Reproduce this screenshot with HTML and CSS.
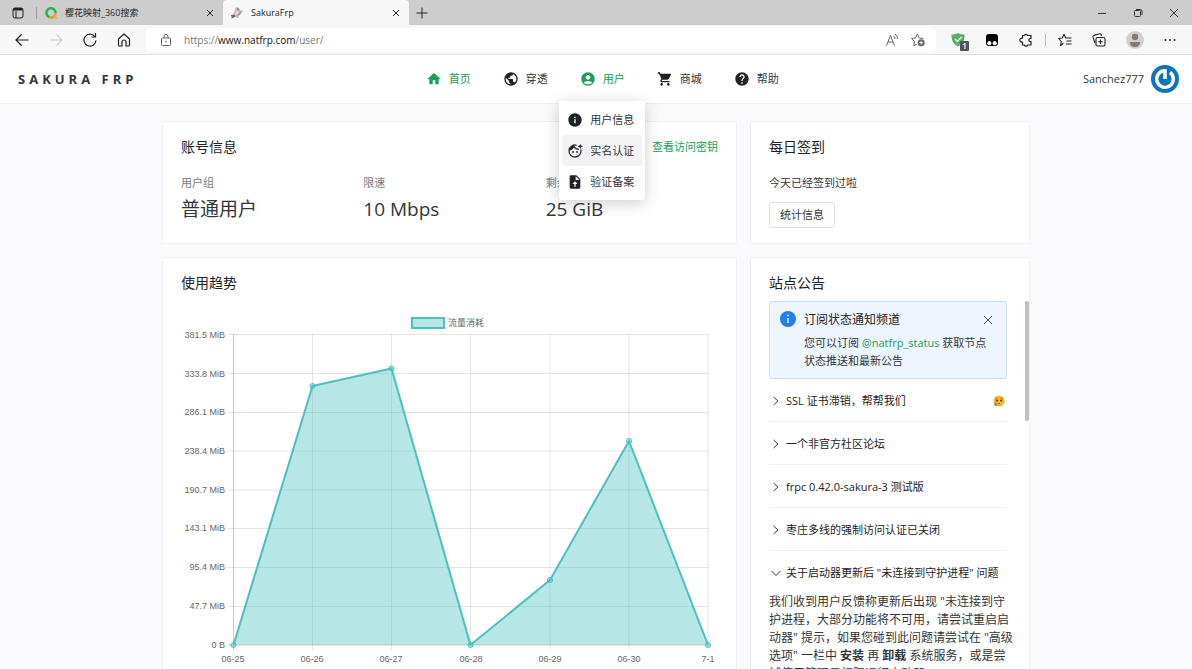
FILE: index.html
```
<!DOCTYPE html>
<html lang="zh-CN">

<head>
    <meta charset="UTF-8">
    <meta name="viewport" content="width=device-width, initial-scale=1.0">
    <title>SakuraFrp</title>
    <link rel="stylesheet" href="styles.css">
</head>

<body>
    <!-- Browser tabs -->
    <div class="tab-bar">
        <button class="tab-menu" aria-label="标签页操作">
            <svg class="icon-12" viewBox="0 0 12 12" fill="none" stroke="#222"><rect x="1" y="1" width="10" height="10" rx="2" /><path d="M1 3h10M4 4v7" /><path d="M1.500 2h9" stroke-width="2" /></svg>
        </button>
        <div class="tab">
            <svg class="icon-12" viewBox="0 0 12 12" fill="none" stroke-width="2.400"><path d="M8.500 9.700A4.600 4.600 0 1 1 10.600 6" stroke="#19b955" /><path d="M10.600 6a4.600 4.600 0 0 1-6.500 4.200" stroke="#f9a11b" /><circle cx="11" cy="10.800" r=".5" fill="#f9a11b" stroke="#f9a11b" stroke-width="1" /></svg>
            <span class="tab-title">樱花映射_360搜索</span>
            <button class="tab-close" aria-label="关闭"><svg class="icon-8" viewBox="0 0 8 8" stroke="#222"><path d="M1 1l6 6M7 1L1 7" /></svg></button>
        </div>
        <div class="tab tab-active">
            <svg class="icon-12" viewBox="0 0 12 12"><path d="M5 0l3 1 1 2 3 1-2 3-2 1-1 3-3-1-4 2 1-4 2-2z" fill="#b9b4bd" /><path d="M5 3l3 1-1 3-3 1z" fill="#e9d5d0" /><path d="M0 8l4 0 0 2-3 1zM6 1l2 1-1 2z" fill="#666a7c" /><path d="M7 7l3-2-2 4z" fill="#c98083" /></svg>
            <span class="tab-title">SakuraFrp</span>
            <button class="tab-close" aria-label="关闭"><svg class="icon-8" viewBox="0 0 8 8" stroke="#222"><path d="M1 1l6 6M7 1L1 7" /></svg></button>
        </div>
        <button class="tab-new" aria-label="新建标签页"><svg class="icon-12" viewBox="0 0 12 12" stroke="#222"><path d="M6 .5v11M.5 6h11" /></svg></button>
        <div class="window-buttons">
            <button aria-label="最小化"><svg class="icon-10" viewBox="0 0 10 10" stroke="#333"><path d="M1 5.500h8" /></svg></button>
            <button aria-label="还原"><svg class="icon-10" viewBox="0 0 10 10" fill="none" stroke="#333"><rect x="1.500" y="2.500" width="6" height="6" rx="1" /><path d="M3 1.500h4.500a1.500 1.500 0 0 1 1.500 1.500V7" /></svg></button>
            <button aria-label="关闭窗口"><svg class="icon-10" viewBox="0 0 10 10" stroke="#333"><path d="M1 1l8 8M9 1L1 9" /></svg></button>
        </div>
    </div>

    <!-- Browser toolbar -->
    <div class="toolbar">
        <div class="toolbar-nav">
            <button aria-label="后退"><svg class="icon-14" viewBox="0 0 14 14" fill="none" stroke="#222" stroke-width="1.200"><path d="M13.500 7H1M6.500 1.500L1 7l5.500 5.500" /></svg></button>
            <button aria-label="前进" disabled><svg class="icon-14" viewBox="0 0 14 14" fill="none" stroke="#ccc" stroke-width="1.200"><path d="M.5 7H13M7.500 1.500L13 7l-5.500 5.500" /></svg></button>
            <button aria-label="刷新"><svg class="icon-14" viewBox="0 0 14 14" fill="none" stroke="#222" stroke-width="1.200"><path d="M13 7.500A6 6 0 1 1 11.800 3.500M12.500 0v4h-4" /></svg></button>
            <button aria-label="主页"><svg class="icon-14" viewBox="0 0 14 14" fill="none" stroke="#222" stroke-width="1.200"><path d="M1.500 6L7 1l5.500 5v6a1 1 0 0 1-1 1H9V9a2 2 0 0 0-4 0v4H2.500a1 1 0 0 1-1-1z" stroke-linejoin="round" /></svg></button>
        </div>
        <div class="address">
            <svg class="icon-12" viewBox="0 0 12 12" fill="none" stroke="#666"><rect x="1.500" y="4" width="9" height="7.500" rx="1" /><path d="M4 4V2.500a2 2 0 0 1 4 0V4" /><circle cx="6" cy="7.700" r=".8" fill="#666" stroke="none" /></svg>
            <span class="url">https://<b>www.natfrp.com</b>/user/</span>
            <button aria-label="大声朗读"><svg class="icon-14" viewBox="0 0 14 14" fill="none" stroke="#666"><path d="M1.500 12.500L5.500 2.500l4 10M3 9h5M8.500 3a3 3 0 0 1 1.500 3M10 1a6 6 0 0 1 2.500 5" /></svg></button>
            <button aria-label="添加收藏"><svg class="icon-14" viewBox="0 0 14 14" fill="none" stroke="#666"><path d="M6 11l-3.200 1.700.6-4.200L.6 5.500l4-.6L6.400 1l1.800 3.900 4 .6" stroke-linejoin="round" /><circle cx="10.200" cy="9.700" r="3.500" fill="#666" stroke="none" /><path d="M10.200 8v3.400M8.500 9.700h3.400" stroke="#fff" /></svg></button>
        </div>
        <div class="toolbar-tools">
            <button class="shield" aria-label="安全防护">
                <svg class="icon-14" viewBox="0 0 14 14"><path d="M7 0c2 1.400 4 1.600 6.500 1.600C13.500 7.500 12 11 7 13.500 2 11 .5 7.500.5 1.600 3 1.600 5 1.400 7 0z" fill="#52b264" /><path d="M4 6l2.500 2.500L10.500 4" fill="none" stroke="#fff" stroke-width="1.300" /></svg>
                <span class="badge">1</span>
            </button>
            <button aria-label="Tampermonkey"><svg class="icon-14" viewBox="0 0 14 14"><rect x="1" y="1" width="12" height="12" rx="3" fill="#000" /><circle cx="4.300" cy="10.200" r="2.100" fill="#fff" /><circle cx="9.700" cy="10.200" r="2.100" fill="#fff" /></svg></button>
            <button aria-label="扩展"><svg class="icon-14" viewBox="0 0 14 14" fill="none" stroke="#222" stroke-width="1.200"><path d="M3.500 2.500h1.800a1.800 1.800 0 0 1 3.400 0H12v3a1.600 1.600 0 1 0 0 3v3.500H8.700a1.800 1.800 0 0 1-3.400 0H3.500V9a2 2 0 1 1 0-3.800z" stroke-linejoin="round" /></svg></button>
            <span class="toolbar-line"></span>
            <button aria-label="收藏夹"><svg class="icon-14" viewBox="0 0 14 14" fill="none" stroke="#222" stroke-width="1.100"><path d="M5.500 10.300L2.500 12.500l.8-4L.6 5.500l3.600-.5L6 1.200 7.800 5h5.700M8.500 8h5M8 11h5.500" stroke-linejoin="round" /></svg></button>
            <button aria-label="集锦"><svg class="icon-14" viewBox="0 0 14 14" fill="none" stroke="#222" stroke-width="1.100"><rect x="4" y="4.500" width="9" height="8.500" rx="1.500" /><path d="M8.500 6.500v4.500M6.200 8.800h4.600M3 10L1 4.200a1.500 1.500 0 0 1 1-1.800L7.500.8a1.500 1.500 0 0 1 1.800 1L9.600 3" /></svg></button>
            <button aria-label="个人资料"><svg class="icon-18" viewBox="0 0 18 18"><circle cx="9" cy="9" r="9" fill="#d2d0ce" /><circle cx="9" cy="6" r="3.200" fill="#7f7b79" /><path d="M3.800 11h10.400c0 3-2 5-5.200 5s-5.200-2-5.200-5z" fill="#7f7b79" /></svg></button>
            <button aria-label="更多"><svg class="icon-12" viewBox="0 0 12 12" fill="#222"><circle cx="1.500" cy="6" r="1" /><circle cx="6" cy="6" r="1" /><circle cx="10.500" cy="6" r="1" /></svg></button>
        </div>
    </div>

    <!-- Site header -->
    <header class="site-header">
        <a class="logo" href="#">SAKURA FRP</a>
        <nav class="site-nav">
            <a class="nav-link active" href="#">
                <svg class="icon-16" viewBox="0 0 24 24"><path d="M10 20v-6h4v6h5v-8h3L12 3 2 12h3v8z" /></svg>
                首页
            </a>
            <a class="nav-link" href="#">
                <svg class="icon-16" viewBox="0 0 24 24"><path d="M12 2C6.480 2 2 6.480 2 12s4.480 10 10 10 10-4.480 10-10S17.520 2 12 2zm-1 17.930c-3.950-.49-7-3.850-7-7.930 0-.62.08-1.210.21-1.790L9 15v1c0 1.100.9 2 2 2v1.930zm6.900-2.540c-.26-.81-1-1.390-1.900-1.390h-1v-3c0-.55-.45-1-1-1H8v-2h2c.55 0 1-.45 1-1V7h2c1.100 0 2-.9 2-2v-.41c2.930 1.190 5 4.060 5 7.410 0 2.080-.8 3.970-2.100 5.390z" /></svg>
                穿透
            </a>
            <div class="nav-group">
                <a class="nav-link active" href="#">
                    <svg class="icon-16" viewBox="0 0 24 24"><path d="M12 2C6.480 2 2 6.480 2 12s4.480 10 10 10 10-4.480 10-10S17.520 2 12 2zm0 4c1.930 0 3.500 1.570 3.500 3.500S13.930 13 12 13s-3.500-1.570-3.500-3.500S10.070 6 12 6zm0 14c-2.030 0-4.430-.82-6.140-2.880C7.550 15.800 9.680 15 12 15s4.450.8 6.140 2.120C16.430 19.180 14.030 20 12 20z" /></svg>
                    用户
                </a>
                <div class="dropdown">
                    <a class="dropdown-item" href="#">
                        <svg class="icon-16" viewBox="0 0 24 24"><path d="M12 2C6.480 2 2 6.480 2 12s4.480 10 10 10 10-4.480 10-10S17.520 2 12 2zm1 15h-2v-6h2v6zm0-8h-2V7h2v2z" /></svg>
                        用户信息
                    </a>
                    <a class="dropdown-item hover" href="#">
                        <svg class="icon-16" viewBox="0 0 24 24"><path d="M20.600 9.500A9 9 0 1 1 14.500 3.400M3.500 10.500C7 10 9 8 10 5c2 3 4.500 4.500 8 4.500" fill="none" stroke="currentColor" stroke-width="2" /><path d="M12 3.500A9 9 0 0 0 3.500 11C7 10.500 9.500 8.500 10.500 5z" /><circle cx="9" cy="13.500" r="1.400" /><circle cx="15" cy="13.500" r="1.400" /><path d="M20 1l1 2.800L24 5l-3 1.200L20 9l-1.200-2.800L16 5l2.800-1.200z" /></svg>
                        实名认证
                    </a>
                    <a class="dropdown-item" href="#">
                        <svg class="icon-16" viewBox="0 0 24 24"><path fill-rule="evenodd" d="M14 2H6c-1.100 0-2 .9-2 2v16c0 1.100.9 2 2 2h12c1.100 0 2-.9 2-2V8l-6-6zm-1 13v4h-2v-4H8l4-4 4 4h-3zm0-6V3.500L18.500 9H13z" /></svg>
                        验证备案
                    </a>
                </div>
            </div>
            <a class="nav-link" href="#">
                <svg class="icon-16" viewBox="0 0 24 24"><path d="M7 18c-1.100 0-1.990.9-1.990 2S5.900 22 7 22s2-.9 2-2-.9-2-2-2zM1 2v2h2l3.600 7.590-1.350 2.450c-.16.28-.25.61-.25.96 0 1.100.9 2 2 2h12v-2H7.420c-.14 0-.25-.11-.25-.25l.03-.12.9-1.630h7.450c.75 0 1.410-.41 1.750-1.030l3.580-6.490c.08-.14.12-.31.12-.48 0-.55-.45-1-1-1H5.210l-.94-2H1zm16 16c-1.100 0-1.990.9-1.990 2s.89 2 1.990 2 2-.9 2-2-.9-2-2-2z" /></svg>
                商城
            </a>
            <a class="nav-link" href="#">
                <svg class="icon-16" viewBox="0 0 24 24"><path d="M12 2C6.480 2 2 6.480 2 12s4.480 10 10 10 10-4.480 10-10S17.520 2 12 2zm1 17h-2v-2h2v2zm2.070-7.750l-.9.92C13.450 12.900 13 13.500 13 15h-2v-.5c0-1.100.45-2.100 1.170-2.830l1.240-1.260c.37-.36.59-.86.59-1.410 0-1.100-.9-2-2-2s-2 .9-2 2H8c0-2.210 1.790-4 4-4s4 1.790 4 4c0 .88-.36 1.680-.93 2.250z" /></svg>
                帮助
            </a>
        </nav>
        <a class="user" href="#">
            Sanchez777
            <svg class="icon-28" viewBox="0 0 28 28"><circle cx="14" cy="14" r="14" fill="#0a75ba" /><path d="M13 5.800A8.300 8.300 0 1 0 19 7.400" fill="none" stroke="#fff" stroke-width="3.400" /><path d="M14 4.200v9.800" stroke="#fff" stroke-width="3.600" /></svg>
        </a>
    </header>

    <main class="page">
        <div class="grid">
            <section class="card">
                <div class="card-header">
                    <h2>账号信息</h2>
                    <a class="link" href="#">查看访问密钥</a>
                </div>
                <div class="card-body stats">
                    <div>
                        <div class="stat-label">用户组</div>
                        <div class="stat-value">普通用户</div>
                    </div>
                    <div>
                        <div class="stat-label">限速</div>
                        <div class="stat-value">10 Mbps</div>
                    </div>
                    <div>
                        <div class="stat-label">剩余流量</div>
                        <div class="stat-value">25 GiB</div>
                    </div>
                </div>
            </section>

            <section class="card">
                <div class="card-header">
                    <h2>每日签到</h2>
                </div>
                <div class="card-body">
                    <p class="sign-text">今天已经签到过啦</p>
                    <button class="btn">统计信息</button>
                </div>
            </section>

            <section class="card">
                <div class="card-header">
                    <h2>使用趋势</h2>
                </div>
                <div class="chart-body">
                    <svg class="chart" viewBox="0 0 537 356" role="img" aria-label="流量消耗">
                        <!-- legend -->
                        <rect x="231" y="6" width="32" height="10" class="chart-legend" />
                        <text x="267" y="14">流量消耗</text>
                        <!-- grid -->
                        <path class="chart-grid" d="M47 22.500h480M47 61.500h480M47 100.500h480M47 139h480M47 178h480M47 216.500h480M47 255.500h480M47 294.500h480M131.500 22v316M210.500 22v316M289.500 22v316M369 22v316M448 22v316M527 22v316" />
                        <path class="chart-axis" d="M52.500 22v316M47 333h480" />
                        <!-- data -->
                        <path class="chart-area" d="M52.500 333L131.500 74L210.500 56.500L289.500 333L369 268L448 129L527 333z" />
                        <path class="chart-line" d="M52.500 333L131.500 74L210.500 56.500L289.500 333L369 268L448 129L527 333" />
                        <g class="chart-dots">
                            <circle cx="52.500" cy="333" r="2.500" />
                            <circle cx="131.500" cy="74" r="2.500" />
                            <circle cx="210.500" cy="56.500" r="2.500" />
                            <circle cx="289.500" cy="333" r="2.500" />
                            <circle cx="369" cy="268" r="2.500" />
                            <circle cx="448" cy="129" r="2.500" />
                            <circle cx="527" cy="333" r="2.500" />
                        </g>
                        <!-- labels -->
                        <g class="y-labels">
                            <text x="44" y="26">381.5 MiB</text>
                            <text x="44" y="65">333.8 MiB</text>
                            <text x="44" y="103">286.1 MiB</text>
                            <text x="44" y="142">238.4 MiB</text>
                            <text x="44" y="181">190.7 MiB</text>
                            <text x="44" y="219">143.1 MiB</text>
                            <text x="44" y="258">95.4 MiB</text>
                            <text x="44" y="297">47.7 MiB</text>
                            <text x="44" y="336">0 B</text>
                        </g>
                        <g class="x-labels">
                            <text x="52" y="350">06-25</text>
                            <text x="131" y="350">06-26</text>
                            <text x="210" y="350">06-27</text>
                            <text x="290" y="350">06-28</text>
                            <text x="369" y="350">06-29</text>
                            <text x="448" y="350">06-30</text>
                            <text x="527" y="350">7-1</text>
                        </g>
                    </svg>
                </div>
            </section>

            <section class="card notice-card">
                <div class="card-header">
                    <h2>站点公告</h2>
                </div>
                <div class="notice-body">
                    <div class="alert">
                        <svg class="icon-16" viewBox="0 0 16 16"><circle cx="8" cy="8" r="8" fill="#2080f0" /><path d="M8 7v5M8 3.700v1.600" stroke="#fff" stroke-width="1.400" /></svg>
                        <div class="alert-main">
                            <div class="alert-title">订阅状态通知频道</div>
                            <p>您可以订阅 <a class="link" href="#">@natfrp_status</a> 获取节点<br>状态推送和最新公告</p>
                        </div>
                        <button class="alert-close" aria-label="关闭"><svg class="icon-10" viewBox="0 0 10 10" stroke="#555"><path d="M1 1l8 8M9 1L1 9" /></svg></button>
                    </div>
                    <button class="notice-item" aria-expanded="false">
                        <svg class="icon-10" viewBox="0 0 10 10"><path d="M2.500 1l4.500 4-4.500 4" /></svg>
                        <span>SSL 证书滞销，帮帮我们</span>
                        <svg class="emoji" viewBox="0 0 12 12"><circle cx="6" cy="6" r="5.500" fill="#fcb52b" /><circle cx="4" cy="5.500" r="1" fill="#4a3323" /><circle cx="8" cy="5.500" r="1" fill="#4a3323" /><path d="M4.800 9q1.200-1 2.400 0M2.500 3.800l1.500-.8M9.500 3.800L8 3" fill="none" stroke="#4a3323" stroke-width=".6" /><path d="M2.500 7q2.500 3 0 4-2.500-1 0-4z" fill="#3d8de0" /></svg>
                    </button>
                    <button class="notice-item" aria-expanded="false">
                        <svg class="icon-10" viewBox="0 0 10 10"><path d="M2.500 1l4.500 4-4.500 4" /></svg>
                        <span>一个非官方社区论坛</span>
                    </button>
                    <button class="notice-item" aria-expanded="false">
                        <svg class="icon-10" viewBox="0 0 10 10"><path d="M2.500 1l4.500 4-4.500 4" /></svg>
                        <span>frpc 0.42.0-sakura-3 测试版</span>
                    </button>
                    <button class="notice-item" aria-expanded="false">
                        <svg class="icon-10" viewBox="0 0 10 10"><path d="M2.500 1l4.500 4-4.500 4" /></svg>
                        <span>枣庄多线的强制访问认证已关闭</span>
                    </button>
                    <button class="notice-item open" aria-expanded="true">
                        <svg class="icon-10" viewBox="0 0 10 10"><path d="M.5 3L5 7.500 9.500 3" /></svg>
                        <span>关于启动器更新后 "未连接到守护进程" 问题</span>
                    </button>
                    <p class="notice-text">我们收到用户反馈称更新后出现 "未连接到守<br>护进程，大部分功能将不可用，请尝试重启启<br>动器" 提示，如果您碰到此问题请尝试在 "高级<br>选项" 一栏中 <strong>安装</strong> 再 <strong>卸载</strong> 系统服务，或是尝<br>试使用管理员权限运行启动器</p>
                </div>
                <span class="scroll-thumb"></span>
            </section>
        </div>
    </main>
</body>

</html>
```
FILE: styles.css
```
* {
    box-sizing: border-box;
}

body {
    margin: 0;
    height: 100vh;
    display: flex;
    flex-direction: column;
    overflow: hidden;
    font-family: "Open Sans", "Noto Sans CJK SC", sans-serif;
    font-size: 11px;
    font-weight: 380;
    line-height: 18px;
    color: #333639;
    background-color: #fafafc;
}

h2,
p {
    margin: 0;
    font-weight: inherit;
}

a {
    color: inherit;
    text-decoration: none;
}

button {
    padding: 0;
    border: none;
    background: none;
    font: inherit;
    color: inherit;
    cursor: pointer;
}

svg {
    display: block;
    flex: none;
}

.icon-8 { width: 8px; height: 8px; }
.icon-10 { width: 10px; height: 10px; }
.icon-12 { width: 12px; height: 12px; }
.icon-14 { width: 14px; height: 14px; }
.icon-16 { width: 16px; height: 16px; }
.icon-18 { width: 18px; height: 18px; }
.icon-28 { width: 28px; height: 28px; }

/* Browser tabs */
.tab-bar {
    flex: none;
    display: flex;
    align-items: center;
    height: 25px;
    background-color: #cdcdcd;
    font-size: 9px;
    color: #222;
}

.tab-menu {
    padding: 0 12px;
    border-right: 1px solid #999;
}

.tab {
    display: flex;
    align-items: center;
    gap: 8px;
    width: 186px;
    height: 25px;
    padding: 0 9px 0 8px;
}

.tab-active {
    background-color: #f7f7f7;
    border-radius: 4px 4px 0 0;
}

.tab-title {
    flex: 1;
}

.tab-new {
    padding: 0 7px;
}

.window-buttons {
    display: flex;
    gap: 26px;
    margin-left: auto;
    padding-right: 13px;
}

/* Browser toolbar */
.toolbar {
    flex: none;
    display: flex;
    align-items: center;
    height: 30px;
    background-color: #f7f7f7;
    border-bottom: 1px solid #e0e0e0;
}

.toolbar-nav {
    display: flex;
    gap: 20px;
    padding: 0 15px;
}

.address {
    flex: 1;
    display: flex;
    align-items: center;
    gap: 12px;
    height: 24px;
    padding: 0 11px 0 14px;
    background-color: #fff;
    border-radius: 4px;
}

.url {
    flex: 1;
    font-size: 10px;
    color: #777;
}

.url b {
    font-weight: 400;
    color: #111;
}

.toolbar-tools {
    display: flex;
    align-items: center;
    gap: 20px;
    padding: 0 16px 0 15px;
}

.toolbar-line {
    width: 1px;
    height: 12px;
    margin: 0 -8px;
    background-color: #bbb;
}

.shield {
    position: relative;
}

.badge {
    position: absolute;
    right: -4px;
    bottom: -4px;
    width: 9px;
    height: 10px;
    background-color: #555;
    border-radius: 1px;
    color: #fff;
    font-size: 8px;
    font-weight: 600;
    line-height: 10px;
}

/* Site header */
.site-header {
    flex: none;
    display: flex;
    align-items: center;
    height: 49px;
    padding: 0 13px 0 18px;
    background-color: #fff;
    border-bottom: 1px solid #efeff5;
}

.logo {
    font-size: 13px;
    font-weight: 700;
    letter-spacing: 4px;
}

.site-nav {
    flex: 1;
    display: flex;
    justify-content: center;
    gap: 32px;
}

.nav-group {
    position: relative;
}

.nav-link,
.dropdown-item {
    display: flex;
    align-items: center;
    gap: 7px;
    white-space: nowrap;
}

.nav-link svg,
.dropdown-item svg {
    fill: #1f2225;
}

.nav-link.active,
.nav-link.active svg,
.link {
    color: #18a058;
    fill: #18a058;
}

.user {
    display: flex;
    align-items: center;
    gap: 7px;
    padding-left: 16px;
}

.dropdown {
    position: absolute;
    top: 31px;
    left: 50%;
    transform: translateX(-50%);
    padding: 3px;
    background-color: #fff;
    border-radius: 3px;
    box-shadow: 0 3px 16px rgba(0, 0, 0, 0.2);
    z-index: 10;
}

.dropdown-item {
    height: 31px;
    padding: 0 8px 0 5px;
    border-radius: 3px;
}

.dropdown-item.hover {
    background-color: #f3f3f5;
}

/* Dashboard */
.page {
    flex: 1;
    min-height: 0;
    overflow: hidden;
    padding: 17px 16px;
}

.grid {
    display: grid;
    grid-template-columns: minmax(0, 1fr) 280px;
    gap: 13px;
    max-width: 868px;
    margin: 0 auto;
}

.card {
    background-color: #fff;
    border: 1px solid #efeff5;
    border-radius: 3px;
}

.card-header {
    display: flex;
    justify-content: space-between;
    align-items: center;
    padding: 15px 18px 0;
}

.card-header h2 {
    font-size: 14px;
    line-height: 20px;
    color: #1f2225;
}

.card-body {
    padding: 17px 18px 15px;
}

.stats {
    display: grid;
    grid-template-columns: repeat(3, 1fr);
    column-gap: 10px;
}

.stat-label {
    color: #767c82;
}

.stat-value {
    margin-top: 3px;
    font-size: 19px;
    line-height: 28px;
}

.sign-text {
    margin-bottom: 10px;
}

.btn {
    height: 26px;
    padding: 0 10px;
    border: 1px solid #e0e0e6;
    border-radius: 3px;
}

/* Chart */
.chart-body {
    padding: 19px 18px;
}

.chart {
    width: 100%;
    height: auto;
    font-family: "Liberation Sans", "Noto Sans CJK SC", sans-serif;
    font-size: 9px;
    fill: #666;
}

.chart-legend {
    fill: #b7e6e6;
    stroke: #4bc0c0;
    stroke-width: 2;
}

.chart-grid {
    fill: none;
    stroke: rgba(0, 0, 0, 0.1);
}

.chart-axis {
    fill: none;
    stroke: rgba(0, 0, 0, 0.2);
}

.chart-area {
    fill: rgba(75, 192, 192, 0.4);
}

.chart-line {
    fill: none;
    stroke: #4bc0c0;
    stroke-width: 2;
    stroke-linejoin: round;
}

.chart-dots {
    fill: rgba(75, 192, 192, 0.4);
    stroke: #4bc0c0;
}

.y-labels {
    text-anchor: end;
}

.x-labels {
    text-anchor: middle;
}

/* Notices */
.notice-card {
    position: relative;
}

.notice-body {
    padding: 8px 22px 18px 18px;
}

.alert {
    display: flex;
    gap: 8px;
    padding: 9px 13px 8px 10px;
    background-color: #edf5fe;
    border: 1px solid #c7dffb;
    border-radius: 3px;
}

.alert-main {
    flex: 1;
    min-width: 0;
    white-space: nowrap;
}

.alert-title {
    margin-bottom: 5px;
    font-size: 12px;
    color: #1f2225;
}

.alert-close {
    align-self: flex-start;
    padding: 4px 0;
}

.notice-item {
    display: flex;
    align-items: center;
    gap: 5px;
    width: 100%;
    padding: 13px 2px 11px;
    border-bottom: 1px solid #efeff5;
    color: #1f2225;
    white-space: nowrap;
}

.notice-item svg {
    fill: none;
    stroke: #333639;
}

.notice-item.open {
    border-bottom: none;
}

.notice-item .emoji {
    width: 12px;
    height: 12px;
    margin-left: auto;
    stroke: none;
}

.notice-text {
    font-size: 12px;
    white-space: nowrap;
}

.notice-text strong {
    font-weight: 700;
}

.scroll-thumb {
    position: absolute;
    top: 43px;
    right: 0;
    width: 4px;
    height: 120px;
    background-color: #bfbfbf;
    border-radius: 2px;
}
```
